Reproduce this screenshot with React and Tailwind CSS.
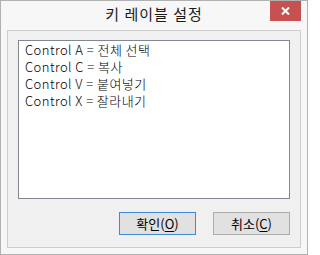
import React from "react";

const font = { fontFamily: '"Noto Sans CJK KR", "Noto Sans", sans-serif' };

const items = [
  "Control A = 전체 선택",
  "Control C = 복사",
  "Control V = 붙여넣기",
  "Control X = 잘라내기",
];

function DialogButton({ label, hotkey, primary }) {
  return (
    <button
      className={`w-[77px] h-[23px] bg-[#e1e1e1] border text-[13px] leading-none text-black flex items-center justify-center ${
        primary ? "border-[#3c8ad8]" : "border-[#adadad]"
      }`}
    >
      {label}(<span className="underline underline-offset-2">{hotkey}</span>)
    </button>
  );
}

export default function App() {
  return (
    <div
      className="w-[308px] h-[255px] border border-[#b1b1b1] bg-[#f7f7f7] flex flex-col select-none"
      style={font}
    >
      {/* Title bar */}
      <div className="relative h-[29px] flex items-center justify-center">
        <span className="text-[15px] text-[#1a1a1a] tracking-[1px] -mt-[2px]">키 레이블 설정</span>
        <div className="absolute top-0 right-[6px] w-[31px] h-[20px] bg-[#c75050] flex items-center justify-center">
          <svg width="9" height="8" viewBox="0 0 9 8">
            <path d="M1 0.5 L8 7.5 M8 0.5 L1 7.5" stroke="white" strokeWidth="2" />
          </svg>
        </div>
      </div>

      {/* Client frame */}
      <div className="flex-1 px-[6px] pb-[6px] flex">
        <div className="flex-1 border border-[#cdcdcd] bg-[#f0f0f0] pt-[9px] px-[10px] flex flex-col">
          <div className="h-[159px] bg-white border border-[#828790] px-[6px] flex flex-col">
            {items.map((t) => (
              <div key={t} className="h-[17px] flex items-center text-[13px] tracking-[0.45px] leading-none text-black font-light whitespace-nowrap">
                {t}
              </div>
            ))}
          </div>
          <div className="mt-[13px] flex justify-end gap-[17px]">
            <DialogButton label="확인" hotkey="O" primary />
            <DialogButton label="취소" hotkey="C" />
          </div>
        </div>
      </div>
    </div>
  );
}
